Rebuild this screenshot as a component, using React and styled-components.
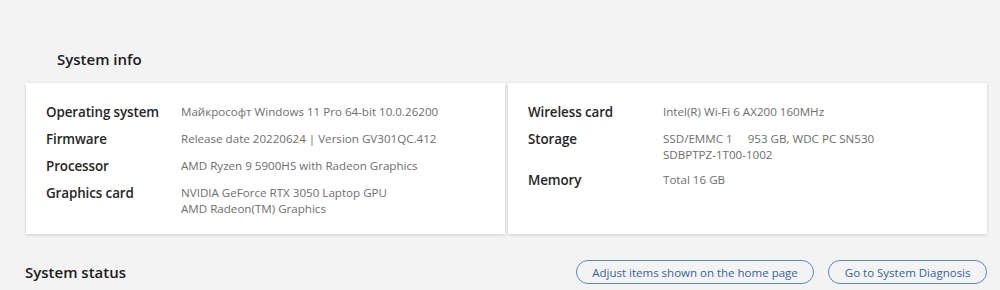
import React from 'react'
import styled, { createGlobalStyle } from 'styled-components'

const GlobalStyle = createGlobalStyle`
  html, body {
    margin: 0;
    padding: 0;
    background: #f3f3f3;
    font-family: "Open Sans", "Noto Sans", sans-serif;
  }
`

const leftRows = [
  { label: 'Operating system', value: ['Майкрософт Windows 11 Pro 64-bit 10.0.26200'] },
  { label: 'Firmware', value: ['Release date 20220624 | Version GV301QC.412'] },
  { label: 'Processor', value: ['AMD Ryzen 9 5900HS with Radeon Graphics'] },
  { label: 'Graphics card', value: ['NVIDIA GeForce RTX 3050 Laptop GPU', 'AMD Radeon(TM) Graphics'] },
]

const rightRows = [
  { label: 'Wireless card', value: ['Intel(R) Wi-Fi 6 AX200 160MHz'] },
  { label: 'Storage', value: ['SSD/EMMC 1\u00a0\u00a0\u00a0\u00a0\u00a0953 GB, WDC PC SN530', 'SDBPTPZ-1T00-1002'] },
  { label: 'Memory', value: ['Total 16 GB'] },
]

function InfoCard({ rows }) {
  return (
    <Card>
      {rows.map((row) => (
        <Row key={row.label} $multi={row.value.length > 1}>
          <Label>{row.label}</Label>
          <Value>
            {row.value.map((line) => (
              <div key={line}>{line}</div>
            ))}
          </Value>
        </Row>
      ))}
    </Card>
  )
}

export default function App() {
  return (
    <Page>
      <GlobalStyle />
      <Heading>System info</Heading>
      <Cards>
        <InfoCard rows={leftRows} />
        <InfoCard rows={rightRows} />
      </Cards>
      <StatusBar>
        <StatusTitle>System status</StatusTitle>
        <Actions>
          <PillButton>Adjust items shown on the home page</PillButton>
          <PillButton>Go to System Diagnosis</PillButton>
        </Actions>
      </StatusBar>
    </Page>
  )
}

const Page = styled.div`
  width: 1000px;
  height: 290px;
  overflow: hidden;
  padding-top: 47px;
  box-sizing: border-box;
`

const Heading = styled.div`
  padding-left: 57px;
  font-size: 15px;
  font-weight: 600;
  color: #1b1b1b;
  line-height: 24px;
  height: 24px;
`

const Cards = styled.div`
  display: grid;
  grid-template-columns: 479px 479px;
  gap: 3px;
  margin: 12px 0 0 26px;
`

const Card = styled.div`
  background: #fff;
  height: 151px;
  box-sizing: border-box;
  padding: 18px 20px 0 20px;
  box-shadow: 0 1px 3px rgba(0, 0, 0, 0.14), 0 0 1px rgba(0, 0, 0, 0.08);
  display: flex;
  flex-direction: column;
  gap: 4px;
`

const Row = styled.div`
  display: grid;
  grid-template-columns: 135px 1fr;
  align-items: start;
  margin-bottom: ${(p) => (p.$multi ? '2px' : '0')};
`

const Label = styled.div`
  font-size: 13.4px;
  line-height: 23px;
  color: #262626;
  font-weight: 600;
  letter-spacing: -0.1px;
`

const Value = styled.div`
  font-size: 11.6px;
  line-height: 16px;
  padding-top: 3px;
  color: #6e6e6e;
`

const StatusBar = styled.div`
  display: flex;
  align-items: center;
  justify-content: space-between;
  margin-top: 26px;
  padding: 0 13px 0 25px;
`

const StatusTitle = styled.div`
  font-size: 15px;
  font-weight: 600;
  color: #1b1b1b;
`

const Actions = styled.div`
  display: flex;
  gap: 14px;
`

const PillButton = styled.button`
  font-family: inherit;
  font-size: 11.5px;
  color: #3363a0;
  background: transparent;
  border: 1.5px solid #5289c2;
  border-radius: 12px;
  height: 24px;
  padding: 0 15.5px;
  cursor: pointer;
`
